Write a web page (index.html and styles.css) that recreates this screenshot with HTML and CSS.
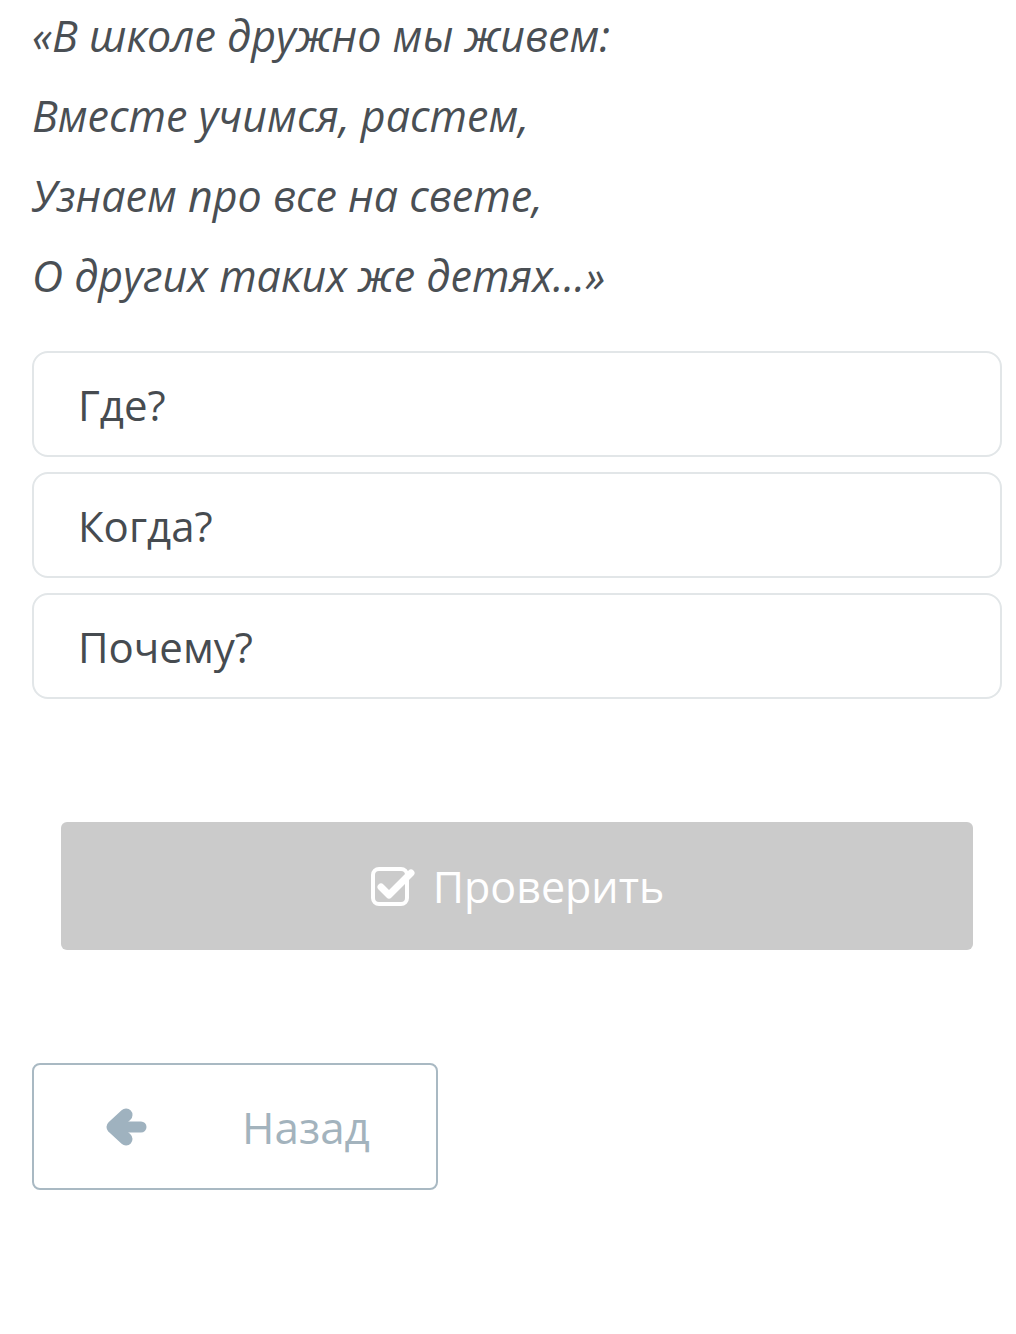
FILE: index.html
```html
<!DOCTYPE html>
<html lang="ru">
<head>
    <meta charset="UTF-8">
    <meta name="viewport" content="width=device-width, initial-scale=1.0">
    <title>Вопрос</title>
    <link rel="stylesheet" href="styles.css">
</head>
<body>
    <div class="page">
        <div class="poem">
            <p>«В школе дружно мы живем:</p>
            <p>Вместе учимся, растем,</p>
            <p>Узнаем про все на свете,</p>
            <p>О других таких же детях...»</p>
        </div>

        <div class="options">
            <div class="option">Где?</div>
            <div class="option">Когда?</div>
            <div class="option">Почему?</div>
        </div>

        <button class="check-btn" type="button">
            <svg class="check-icon" width="46" height="40" viewBox="0 0 46 40">
                <rect x="3" y="3" width="34" height="35" rx="6" fill="none" stroke="#fff" stroke-width="4"/>
                <path d="M11 21 L19 29 L41 7" fill="none" stroke="#fff" stroke-width="7" stroke-linecap="round" stroke-linejoin="round"/>
            </svg>
            Проверить
        </button>

        <button class="back-btn" type="button">
            <svg class="back-icon" width="50" height="42" viewBox="0 0 50 42">
                <path d="M26 9 L13 21 L26 33" fill="none" stroke="#9fb2bf" stroke-width="13" stroke-linecap="round" stroke-linejoin="round"/>
                <path d="M16 21 L41 21" stroke="#9fb2bf" stroke-width="11" stroke-linecap="round"/>
            </svg>
            <span>Назад</span>
        </button>
    </div>
</body>
</html>
```

FILE: styles.css
```css
body {
    margin: 0;
    background: #fff;
    font-family: "Open Sans", "Noto Sans", sans-serif;
    color: #464b50;
}

.page {
    padding: 0 14px 0 32px;
}

.poem {
    margin-top: -4px;
}

.poem p {
    margin: 0;
    font-size: 43px;
    font-style: italic;
    line-height: 80px;
    color: #4a4f54;
}

.options {
    margin-top: 35px;
    display: flex;
    flex-direction: column;
    gap: 15px;
}

.option {
    height: 106px;
    box-sizing: border-box;
    display: flex;
    align-items: center;
    padding-left: 44px;
    border: 2px solid #e2e6e8;
    border-radius: 16px;
    font-size: 42px;
}

.check-btn {
    display: flex;
    align-items: center;
    justify-content: center;
    gap: 17px;
    width: 912px;
    height: 128px;
    margin: 123px 0 0 29px;
    background: #cbcbcb;
    border: none;
    border-radius: 6px;
    color: #fff;
    font-family: "Open Sans", "Noto Sans", sans-serif;
    font-size: 43px;
}

.back-btn {
    display: flex;
    align-items: center;
    width: 406px;
    height: 127px;
    margin-top: 113px;
    padding: 0 0 0 66px;
    box-sizing: border-box;
    background: #fff;
    border: 2px solid #a9b9c3;
    border-radius: 8px;
    color: #a3b3bd;
    font-family: "Open Sans", "Noto Sans", sans-serif;
    font-size: 44px;
}

.back-btn span {
    margin-left: 92px;
}
```
